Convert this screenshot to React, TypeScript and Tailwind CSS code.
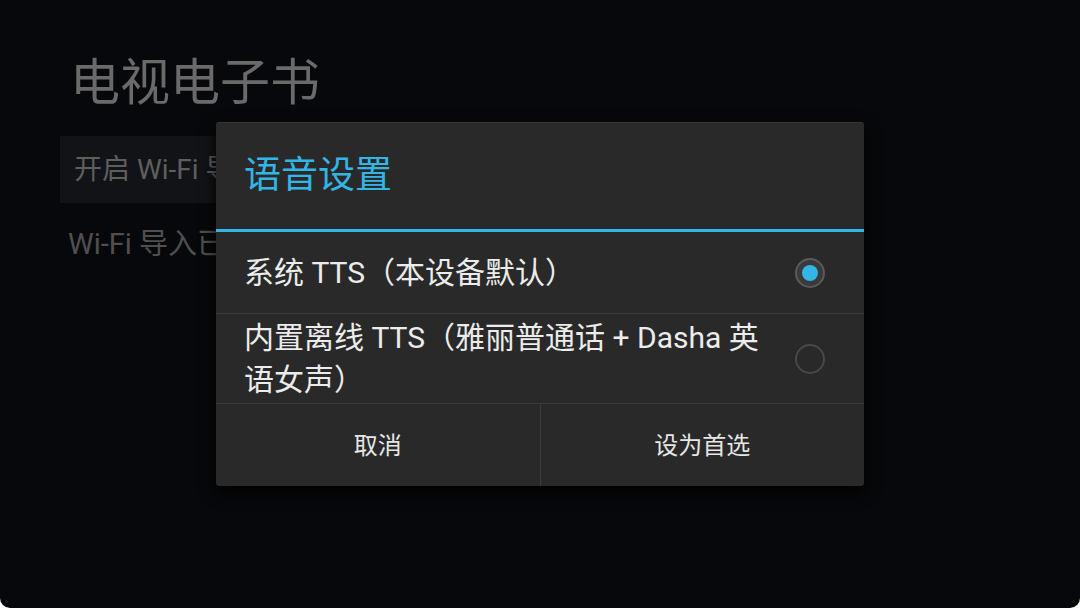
import React from "react";

const FONT = 'Roboto, "Noto Sans CJK SC", "Noto Sans", sans-serif';

function Radio({ checked }: { checked: boolean }) {
  return (
    <svg width="32" height="32" viewBox="0 0 32 32" className="shrink-0">
      {checked ? (
        <>
          <circle cx="16" cy="16" r="14" fill="#3a3a3a" stroke="#5a5a5a" strokeWidth="2" />
          <circle cx="16" cy="16" r="8" fill="#33b5e5" />
        </>
      ) : (
        <circle cx="16" cy="16" r="14" fill="none" stroke="#484848" strokeWidth="2" />
      )}
    </svg>
  );
}

export default function App() {
  return (
    <div className="w-[1080px] h-[608px] bg-white" style={{ fontFamily: FONT }}>
      <div className="relative w-full h-full bg-[#07080b] rounded-b-[10px] overflow-hidden">
        {/* background page */}
        <div className="flex flex-col pl-[70px] pt-[50px]">
          <div className="text-[50px] leading-[66px] text-[#6a6a6a]">电视电子书</div>
          <div className="ml-[-10px] mt-[20px] h-[67px] w-[320px] bg-[#121316] flex items-center px-[14px] text-[28px] text-[#5e5e5e]">
            开启 Wi-Fi 导入
          </div>
          <div className="ml-[-2px] mt-[23px] text-[29px] leading-[36px] text-[#4f4f4f]">Wi-Fi 导入已关闭</div>
        </div>

        {/* dialog */}
        <div className="absolute left-[216px] top-[122px] w-[648px] bg-[#292929] rounded-[3px] border-t border-[#363636] shadow-[0_6px_16px_rgba(0,0,0,0.9)] flex flex-col">
          <div className="h-[106px] flex items-center pl-[28px] text-[37px] text-[#33b5e5]">语音设置</div>
          <div className="h-[3px] bg-[#33b5e5]" />
          <div className="h-[82px] flex items-center pl-[28px] pr-[38px] border-b border-[#3b3b3b]">
            <div className="flex-1 text-[30px] leading-[42px] text-[#ececec]">系统 TTS（本设备默认）</div>
            <Radio checked />
          </div>
          <div className="h-[90px] flex items-center pl-[28px] pr-[38px] border-b border-[#3b3b3b]">
            <div className="flex-1 pr-[24px] text-[30px] leading-[42px] text-[#ececec]">
              内置离线 TTS（雅丽普通话 + Dasha 英语女声）
            </div>
            <Radio checked={false} />
          </div>
          <div className="h-[82px] flex">
            <div className="flex-1 flex items-center justify-center pt-[2px] text-[24px] text-[#e6e6e6] border-r border-[#3b3b3b]">取消</div>
            <div className="flex-1 flex items-center justify-center pt-[2px] text-[24px] text-[#e6e6e6]">设为首选</div>
          </div>
        </div>
      </div>
    </div>
  );
}
